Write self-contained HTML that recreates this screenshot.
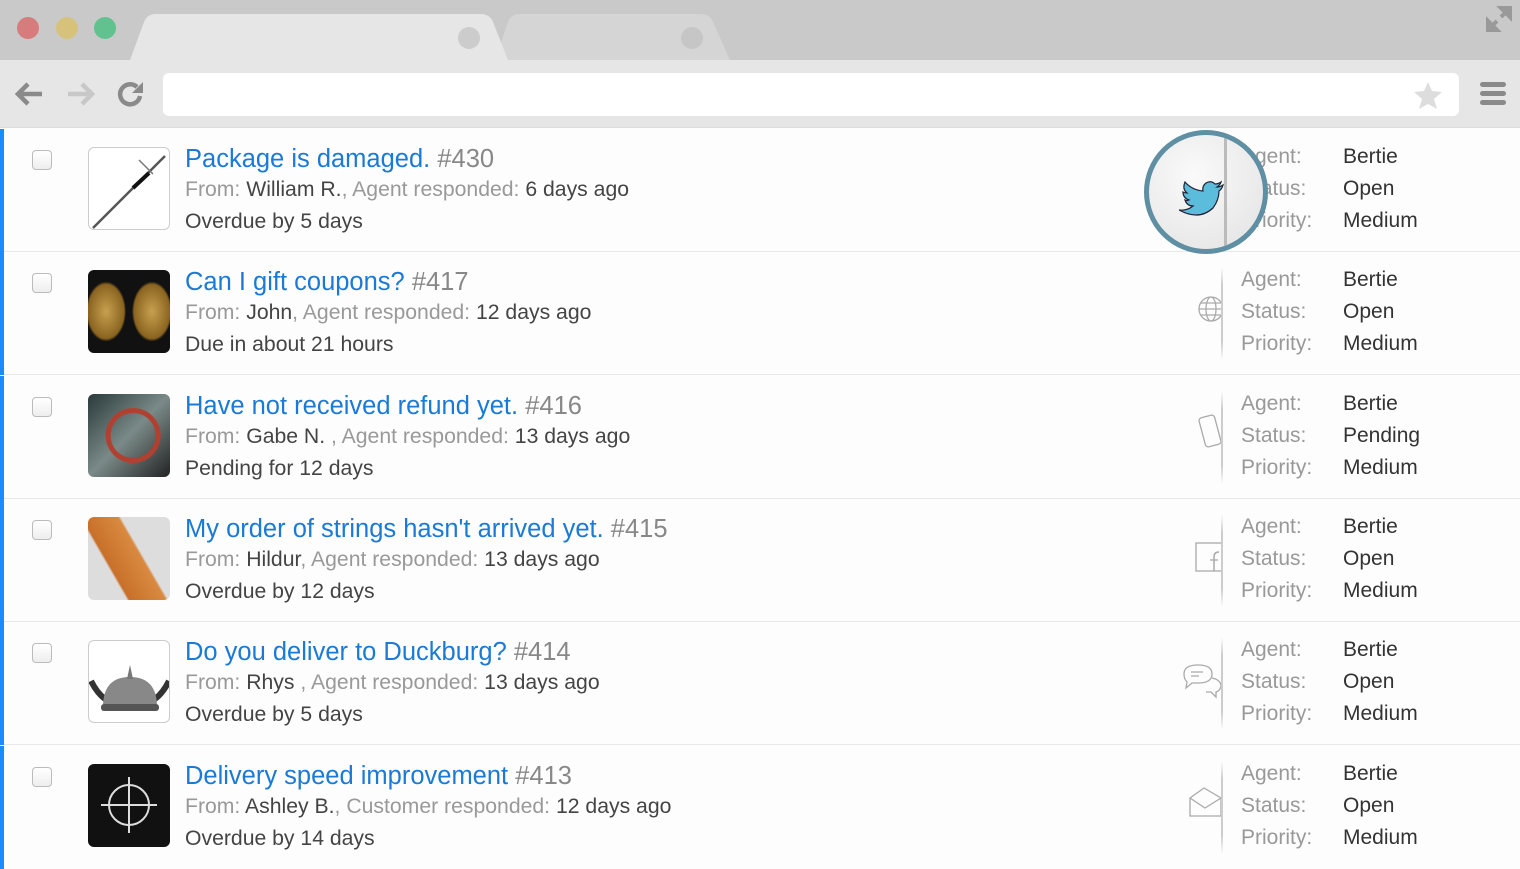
<!DOCTYPE html>
<html><head><meta charset="utf-8"><style>
*{margin:0;padding:0;box-sizing:border-box}
body{width:1520px;height:864px;overflow:hidden;background:#fdfdfd;font-family:"Liberation Sans",Arial,sans-serif;position:relative}
.abs{position:absolute}
.top{left:0;top:0;width:1520px;height:60px;background:#c9c9c9}
.tb{left:0;top:60px;width:1520px;height:68px;background:#e6e6e6;border-bottom:1px solid #dcdcdc}
.dot{top:17px;width:22px;height:22px;border-radius:50%}
.addr{left:163px;top:73px;width:1296px;height:43px;background:#fff;border-radius:6px}
.row{left:0;width:1520px;height:123px;border-bottom:1px solid #e8e8e8}
.bar{left:0;top:0;width:4px;height:123px;background:#1a8cff}
.cb{left:32px;top:21px;width:20px;height:20px;border:1px solid #bbb;border-radius:4px;background:linear-gradient(#fff,#eee)}
.th{left:88px;top:18px;width:82px;height:83px;border-radius:6px;overflow:hidden}
.t1{left:185px;top:16px;font-size:25.5px;color:#1a7ad6;white-space:nowrap}
.t1 span{color:#888}
.t2{left:185px;top:49px;font-size:21.2px;color:#999;white-space:nowrap}
.t2 b{font-weight:normal;color:#444}
.t3{left:185px;top:81px;font-size:21.2px;color:#444;white-space:nowrap}
.div{left:1221px;top:15px;width:2px;height:93px;background:linear-gradient(#fdfdfd,#ccc 20%,#ccc 80%,#fdfdfd)}
.lab{left:1241px;font-size:21px;color:#999}
.val{left:1343px;font-size:21px;color:#333}
.ic{left:1180px;top:30px;width:41px;height:60px;overflow:hidden}
</style></head><body>
<div class="abs top"></div>
<div class="abs dot" style="left:17px;background:#d77c7c"></div>
<div class="abs dot" style="left:56px;background:#d7c27c"></div>
<div class="abs dot" style="left:94px;background:#62c28f"></div>
<svg class="abs" style="left:120px;top:14px" width="630" height="48"><path d="M375 46 L388 8 Q391 0 400 0 L580 0 Q590 0 593 8 L610 46Z" fill="#d5d5d5"/><path d="M10 46 L24 8 Q27 0 36 0 L360 0 Q370 0 373 8 L388 46Z" fill="#e6e6e6"/><circle cx="349" cy="24" r="11" fill="#ccc"/><circle cx="572" cy="24" r="11" fill="#c6c6c6"/></svg>
<svg class="abs" style="left:1484px;top:4px" width="30" height="30"><path d="M17 4h9v9zM13 26H4v-9zM21 9l-4 4M9 21l4-4" stroke="#999" stroke-width="4" fill="#999"/></svg>
<div class="abs tb"></div>
<svg class="abs" style="left:12px;top:78px" width="140" height="34"><path d="M30 16H6M16 6 6 16l10 10" stroke="#8a8a8a" stroke-width="4.5" fill="none"/><path d="M56 16h24M70 6l10 10-10 10" stroke="#c8c8c8" stroke-width="4.5" fill="none"/><path d="M128 18a10 10 0 1 1-3-9" stroke="#8a8a8a" stroke-width="4.5" fill="none"/><path d="M131 4v11h-11z" fill="#8a8a8a"/></svg>
<div class="abs addr"></div>
<svg class="abs" style="left:1413px;top:80px" width="30" height="30"><path d="M15 2l4 9 10 1-8 7 3 10-9-5-9 5 3-10-8-7 10-1z" fill="#ddd"/></svg>
<div class="abs" style="left:1480px;top:82px;width:26px;height:5px;background:#8a8a8a;border-radius:3px;box-shadow:0 9px 0 #8a8a8a,0 18px 0 #8a8a8a"></div>

<div class="abs row" style="top:129px"><div class="abs bar"></div><div class="abs cb"></div>
<div class="abs th" style="border:1px solid #ccc;background:#fff"><svg width="82" height="83"><path d="M4 80 L76 8" stroke="#555" stroke-width="2.5"/><path d="M44 40 L60 25" stroke="#111" stroke-width="4"/><path d="M50 12l14 14" stroke="#777" stroke-width="1.5"/></svg></div>
<div class="abs t1">Package is damaged. <span>#430</span></div>
<div class="abs t2">From: <b>William R.</b>, Agent responded: <b>6 days ago</b></div>
<div class="abs t3">Overdue by 5 days</div>
<div class="abs lab" style="top:16px">Agent:</div><div class="abs lab" style="top:48px">Status:</div><div class="abs lab" style="top:80px">Priority:</div>
<div class="abs val" style="top:16px">Bertie</div><div class="abs val" style="top:48px">Open</div><div class="abs val" style="top:80px">Medium</div>
</div>

<div class="abs row" style="top:252px"><div class="abs bar"></div><div class="abs cb"></div>
<div class="abs th" style="background:radial-gradient(ellipse 20px 30px at 22% 50%,#c9a050 0,#8a6420 90%,transparent 100%),radial-gradient(ellipse 20px 30px at 78% 50%,#c9a050 0,#8a6420 90%,transparent 100%),#111"></div>
<div class="abs t1">Can I gift coupons? <span>#417</span></div>
<div class="abs t2">From: <b>John</b>, Agent responded: <b>12 days ago</b></div>
<div class="abs t3">Due in about 21 hours</div>
<div class="abs ic"><svg width="41" height="60"><circle cx="31" cy="27" r="12" fill="none" stroke="#aaa" stroke-width="1.3"/><ellipse cx="31" cy="27" rx="5" ry="12" fill="none" stroke="#aaa" stroke-width="1.3"/><path d="M19 27h24M21 21h20M21 33h20" stroke="#aaa" stroke-width="1.3"/></svg></div>
<div class="abs div"></div>
<div class="abs lab" style="top:16px">Agent:</div><div class="abs lab" style="top:48px">Status:</div><div class="abs lab" style="top:80px">Priority:</div>
<div class="abs val" style="top:16px">Bertie</div><div class="abs val" style="top:48px">Open</div><div class="abs val" style="top:80px">Medium</div>
</div>

<div class="abs row" style="top:376px"><div class="abs bar"></div><div class="abs cb"></div>
<div class="abs th" style="background:radial-gradient(circle at 55% 50%,transparent 0,transparent 22px,#b04030 23px,#b04030 27px,transparent 28px),linear-gradient(135deg,#2a3a3a,#7a8a88 50%,#222)"></div>
<div class="abs t1">Have not received refund yet. <span>#416</span></div>
<div class="abs t2">From: <b>Gabe N.</b> , Agent responded: <b>13 days ago</b></div>
<div class="abs t3">Pending for 12 days</div>
<div class="abs ic"><svg width="41" height="60"><rect x="22" y="10" width="16" height="30" rx="3" transform="rotate(-15 30 25)" fill="none" stroke="#aaa" stroke-width="1.3"/></svg></div>
<div class="abs div"></div>
<div class="abs lab" style="top:16px">Agent:</div><div class="abs lab" style="top:48px">Status:</div><div class="abs lab" style="top:80px">Priority:</div>
<div class="abs val" style="top:16px">Bertie</div><div class="abs val" style="top:48px">Pending</div><div class="abs val" style="top:80px">Medium</div>
</div>

<div class="abs row" style="top:499px"><div class="abs bar"></div><div class="abs cb"></div>
<div class="abs th" style="background:linear-gradient(60deg,#ddd 0,#ddd 30%,#c8702a 32%,#d98a40 60%,#ddd 62%)"></div>
<div class="abs t1">My order of strings hasn't arrived yet. <span>#415</span></div>
<div class="abs t2">From: <b>Hildur</b>, Agent responded: <b>13 days ago</b></div>
<div class="abs t3">Overdue by 12 days</div>
<div class="abs ic"><svg width="41" height="60"><rect x="16" y="14" width="28" height="28" fill="none" stroke="#aaa" stroke-width="1.3"/><path d="M34 42V28q0-5 5-5" stroke="#aaa" stroke-width="1.5" fill="none"/><path d="M30 31h8" stroke="#aaa" stroke-width="1.3"/></svg></div>
<div class="abs div"></div>
<div class="abs lab" style="top:16px">Agent:</div><div class="abs lab" style="top:48px">Status:</div><div class="abs lab" style="top:80px">Priority:</div>
<div class="abs val" style="top:16px">Bertie</div><div class="abs val" style="top:48px">Open</div><div class="abs val" style="top:80px">Medium</div>
</div>

<div class="abs row" style="top:622px"><div class="abs bar"></div><div class="abs cb"></div>
<div class="abs th" style="border:1px solid #ccc;background:#fff"><svg width="82" height="83"><path d="M2 40q6 12 14 18M80 40q-6 12-14 18" stroke="#333" stroke-width="6" fill="none"/><path d="M14 66q0-30 27-30t27 30z" fill="#888"/><path d="M38 38l3-14 3 14z" fill="#777"/><rect x="12" y="63" width="58" height="7" rx="3" fill="#555"/></svg></div>
<div class="abs t1">Do you deliver to Duckburg? <span>#414</span></div>
<div class="abs t2">From: <b>Rhys</b> , Agent responded: <b>13 days ago</b></div>
<div class="abs t3">Overdue by 5 days</div>
<div class="abs ic"><svg width="41" height="60"><path d="M4 22q0-9 14-9t14 9-14 9l-6 0-6 5 1-6q-3-3-3-8z" fill="none" stroke="#aaa" stroke-width="1.3"/><path d="M11 20h12M11 24h8" stroke="#aaa" stroke-width="1.3"/><path d="M32 26q9 2 9 8-1 5-5 6l0 5-5-5h-5" fill="none" stroke="#aaa" stroke-width="1.3"/></svg></div>
<div class="abs div"></div>
<div class="abs lab" style="top:16px">Agent:</div><div class="abs lab" style="top:48px">Status:</div><div class="abs lab" style="top:80px">Priority:</div>
<div class="abs val" style="top:16px">Bertie</div><div class="abs val" style="top:48px">Open</div><div class="abs val" style="top:80px">Medium</div>
</div>

<div class="abs row" style="top:746px;border:none"><div class="abs bar"></div><div class="abs cb"></div>
<div class="abs th" style="background:#111"><svg width="82" height="83"><circle cx="41" cy="41" r="20" fill="none" stroke="#ddd" stroke-width="2"/><path d="M41 13v56M13 41h56" stroke="#ddd" stroke-width="2"/></svg></div>
<div class="abs t1">Delivery speed improvement <span>#413</span></div>
<div class="abs t2">From: <b>Ashley B.</b>, Customer responded: <b>12 days ago</b></div>
<div class="abs t3">Overdue by 14 days</div>
<div class="abs ic"><svg width="41" height="60"><path d="M10 22l14-10 17 10v18H10z M10 22l15 10 16-10" fill="none" stroke="#aaa" stroke-width="1.3"/></svg></div>
<div class="abs div"></div>
<div class="abs lab" style="top:16px">Agent:</div><div class="abs lab" style="top:48px">Status:</div><div class="abs lab" style="top:80px">Priority:</div>
<div class="abs val" style="top:16px">Bertie</div><div class="abs val" style="top:48px">Open</div><div class="abs val" style="top:80px">Medium</div>
</div>

<div class="abs" style="left:1144px;top:130px;width:124px;height:124px;border-radius:50%;border:5px solid #5f8fa3;background:radial-gradient(circle at 40% 35%,#fafafa,#e2e2e2);overflow:hidden">
<div class="abs" style="left:75px;top:0;width:3px;height:120px;background:#bbb"></div>
<svg class="abs" style="left:30px;top:45px" width="46" height="38"><path d="M44 5q-3 2-6 2 3-2 4-5-3 2-6 2-4-4-9-1-4 3-3 8-11-1-18-9-3 7 2 11-2 0-4-1 0 6 6 8-2 1-4 0 2 6 8 6-6 5-14 4 20 11 34-2 6-8 6-17 3-2 4-6z" fill="#5cbcdc" stroke="#223" stroke-width="1.2"/></svg>
</div>
</body></html>
